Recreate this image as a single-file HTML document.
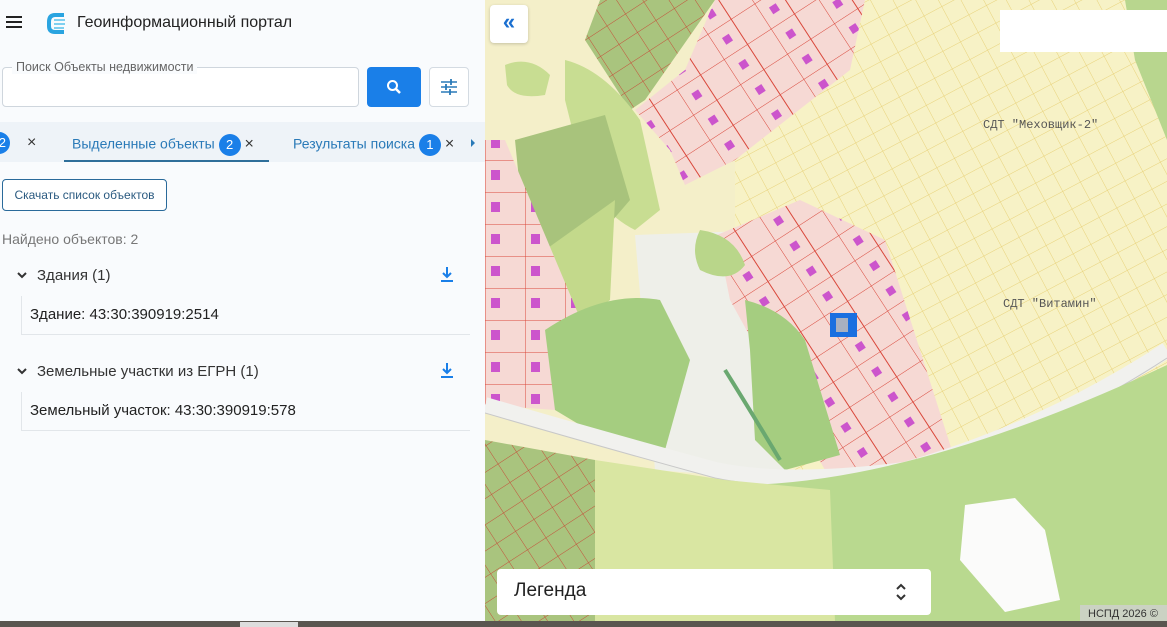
<!DOCTYPE html>
<html><head><meta charset="utf-8"><style>
*{margin:0;padding:0;box-sizing:border-box}
body{width:1167px;height:627px;overflow:hidden;font-family:"Liberation Sans",sans-serif;background:#f9fbfd;position:relative}
.a{position:absolute}
.panel{left:0;top:0;width:485px;height:621px;background:#f9fbfd}
.t{white-space:nowrap}
.badge{display:inline-block;width:22px;height:22px;border-radius:11px;background:#1a7fe8;color:#fff;font-size:13px;text-align:center;line-height:22px;vertical-align:middle}
</style></head><body>
<div class="a panel">
 <div class="a" style="left:6px;top:16px;width:16px;height:2px;background:#222;box-shadow:0 5px 0 #222,0 10px 0 #222"></div>
 <svg class="a" style="left:46px;top:12px" width="22" height="22" viewBox="0 0 22 22"><path d="M18 3 H9 Q3 3 3 10 V14 Q3 20 9 20 H18" fill="none" stroke="#2aa4e0" stroke-width="4"/><path d="M8 8 H19 M8 12 H19 M8 16 H18" stroke="#7fd0f0" stroke-width="2"/></svg>
 <div class="a t" style="left:77px;top:14px;font-size:16px;color:#222">Геоинформационный портал</div>
 <div class="a" style="left:2px;top:67px;width:357px;height:40px;border:1px solid #cfd6dd;border-radius:4px;background:#fff"></div>
 <div class="a t" style="left:12px;top:60px;font-size:12.5px;color:#666;background:#f9fbfd;padding:0 4px">Поиск Объекты недвижимости</div>
 <div class="a" style="left:367px;top:67px;width:54px;height:40px;background:#1a7fe8;border-radius:4px"></div>
 <svg class="a" style="left:386px;top:79px" width="16" height="16" viewBox="0 0 16 16"><circle cx="6.5" cy="6.5" r="4.5" fill="none" stroke="#fff" stroke-width="2"/><path d="M10 10 L14 14" stroke="#fff" stroke-width="2.5"/></svg>
 <div class="a" style="left:429px;top:67px;width:40px;height:40px;border:1px solid #d4dbe2;border-radius:4px;background:#fff"></div>
 <svg class="a" style="left:440px;top:79px" width="18" height="16" viewBox="0 0 18 16"><path d="M1 3H17M1 8H17M1 13H17" stroke="#2a7ab8" stroke-width="1.6"/><path d="M11 0V6M6 5V11M10 10V16" stroke="#2a7ab8" stroke-width="1.8"/></svg>
 <div class="a" style="left:0;top:122px;width:485px;height:40px;background:#eef3f8"></div>
 <div class="a" style="left:-12px;top:132px;width:22px;height:22px;border-radius:11px;background:#1a7fe8;color:#fff;font-size:13px;text-align:right;line-height:22px;padding-right:4px">2</div>
 <div class="a t" style="left:27px;top:134px;font-size:16px;color:#333">×</div>
 <div class="a t" style="left:72px;top:134px;font-size:14px;color:#2a7ab8">Выделенные объекты <span class="badge">2</span> <span style="color:#333;font-size:16px">×</span></div>
 <div class="a" style="left:64px;top:160px;width:205px;height:2px;background:#2f6f9a"></div>
 <div class="a t" style="left:293px;top:134px;font-size:14px;color:#2a7ab8">Результаты поиска <span class="badge">1</span> <span style="color:#333;font-size:16px">×</span></div>
 <div class="a" style="left:471px;top:139px;width:0;height:0;border-left:4px solid #2a7ab8;border-top:4px solid transparent;border-bottom:4px solid transparent"></div>
 <div class="a t" style="left:2px;top:179px;width:165px;height:32px;border:1px solid #2a6a9a;border-radius:4px;font-size:12px;color:#2a5a80;text-align:center;line-height:30px;background:#fff">Скачать список объектов</div>
 <div class="a t" style="left:2px;top:231px;font-size:14px;color:#777">Найдено объектов: 2</div>
 <svg class="a" style="left:17px;top:272px" width="10" height="8"><path d="M1 1L5 5L9 1" fill="none" stroke="#333" stroke-width="2"/></svg>
 <div class="a t" style="left:37px;top:267px;font-size:15px;color:#333">Здания (1)</div>
 <svg class="a" style="left:440px;top:266px" width="14" height="17"><path d="M7 1V10M3 7L7 11L11 7" fill="none" stroke="#1a7fe8" stroke-width="2"/><path d="M1 15H13" stroke="#1a7fe8" stroke-width="2"/></svg>
 <div class="a" style="left:21px;top:296px;width:449px;height:39px;border-left:1px solid #e2e6ea;border-bottom:1px solid #e2e6ea"></div>
 <div class="a t" style="left:30px;top:306px;font-size:15px;color:#222">Здание: 43:30:390919:2514</div>
 <svg class="a" style="left:17px;top:368px" width="10" height="8"><path d="M1 1L5 5L9 1" fill="none" stroke="#333" stroke-width="2"/></svg>
 <div class="a t" style="left:37px;top:363px;font-size:15px;color:#333">Земельные участки из ЕГРН (1)</div>
 <svg class="a" style="left:440px;top:362px" width="14" height="17"><path d="M7 1V10M3 7L7 11L11 7" fill="none" stroke="#1a7fe8" stroke-width="2"/><path d="M1 15H13" stroke="#1a7fe8" stroke-width="2"/></svg>
 <div class="a" style="left:21px;top:392px;width:449px;height:39px;border-left:1px solid #e2e6ea;border-bottom:1px solid #e2e6ea"></div>
 <div class="a t" style="left:30px;top:402px;font-size:15px;color:#222">Земельный участок: 43:30:390919:578</div>
</div>
<svg class="a" style="left:485px;top:0" width="682" height="627" viewBox="0 0 682 627">
<defs>
 <pattern id="yg" width="20" height="20" patternUnits="userSpaceOnUse" patternTransform="rotate(-28)"><rect width="20" height="20" fill="#f7f2c6"/><path d="M0 0H20M0 0V20" stroke="#e8d27a" stroke-width="1"/></pattern>
 <pattern id="rg" width="56" height="30" patternUnits="userSpaceOnUse" patternTransform="rotate(-33)"><rect width="56" height="30" fill="#f6d9d4"/><path d="M0 0H56M0 0V30M28 0V30" stroke="#d9473a" stroke-width="1"/><rect x="10" y="11" width="8" height="8" fill="#cc55cc"/></pattern>
 <pattern id="og" width="22" height="22" patternUnits="userSpaceOnUse" patternTransform="rotate(-33)"><rect width="22" height="22" fill="#a9c47e"/><path d="M0 0H22M0 0V22" stroke="#c4503a" stroke-width="1"/></pattern>
 <pattern id="lp" width="40" height="32" patternUnits="userSpaceOnUse"><rect width="40" height="32" fill="#f6d9d4"/><path d="M0 0H40M0 0V32" stroke="#d9473a" stroke-width="1"/><rect x="6" y="10" width="9" height="10" fill="#cc55cc"/></pattern>
</defs>
<rect width="682" height="627" fill="#f4efc9"/>
<rect x="250" y="0" width="432" height="480" fill="url(#yg)"/>
<path d="M640 0H682V140L650 60Z" fill="#b8d68e"/>
<rect x="515" y="10" width="167" height="42" fill="#fff"/>
<path d="M115 0H230L160 100L145 110L100 40Z" fill="url(#og)"/>
<path d="M230 0H380L365 70L250 160L200 185L185 150L150 110L200 70Z" fill="url(#rg)"/>
<path d="M20 65Q45 55 65 75L60 95Q30 100 22 85Z" fill="#c8dd92"/>
<path d="M80 60Q120 70 155 120L175 210L150 230Q110 210 95 160L80 100Z" fill="#c8dd92"/>
<path d="M30 140L120 115L145 200L85 270L40 240Z" fill="#a8c37c"/>
<path d="M60 250L130 200L125 300L100 320L70 300Z" fill="#c3d98b"/>
<path d="M0 140H20L100 330L70 410L0 405Z" fill="url(#lp)"/>
<path d="M150 235L290 230L300 480L170 470Z" fill="#eeefe9"/>
<path d="M232 235L315 200L400 240L470 460L380 478L340 470L300 400L245 300Z" fill="url(#rg)"/>
<path d="M215 230Q250 235 260 265Q245 285 215 270Q205 250 215 230Z" fill="#b9d68a"/>
<path d="M60 330Q120 290 175 300L205 360L180 450L120 440L70 410Z" fill="#a5cd80"/>
<path d="M260 300Q300 310 320 340L355 455L300 470L270 440L265 350Z" fill="#a5cd80"/>
<path d="M0 405Q120 440 230 470Q300 485 420 470Q560 430 682 350" fill="none" stroke="#f1f1ee" stroke-width="16"/>
<path d="M0 405Q120 440 230 470Q300 485 420 470Q560 430 682 350" fill="none" stroke="#c8c8c8" stroke-width="1" transform="translate(0,8)"/>
<path d="M240 485Q420 488 682 365V621H240Z" fill="#b9d98f"/>
<path d="M0 440L110 460L110 621H0Z" fill="url(#og)"/>
<path d="M110 460L240 480L345 490L350 621H110Z" fill="#d9e6a2"/>
<path d="M480 505L530 498L560 530L575 600L520 612L475 560Z" fill="#fbfbfa"/>
<path d="M240 370Q265 410 295 460" fill="none" stroke="#6aa870" stroke-width="4"/>
<rect x="345" y="313" width="27" height="24" fill="#1a6fe0"/><rect x="351" y="318" width="12" height="14" fill="#a8b0c0"/>
<text x="498" y="128" font-family="Liberation Mono,monospace" font-size="12" fill="#555">СДТ "Меховщик-2"</text>
<text x="518" y="307" font-family="Liberation Mono,monospace" font-size="12" fill="#555">СДТ "Витамин"</text>
<rect x="595" y="605" width="87" height="16" fill="#cfcfcf" opacity=".8"/>
<text x="603" y="617" font-size="11" fill="#333" font-family="Liberation Sans,sans-serif">НСПД 2026 ©</text>
</svg>
<div class="a" style="left:490px;top:5px;width:38px;height:38px;background:#fff;border-radius:4px;box-shadow:0 1px 3px rgba(0,0,0,.2);color:#1a6fd0;font-size:22px;font-weight:bold;text-align:center;line-height:34px">«</div>
<div class="a" style="left:497px;top:569px;width:434px;height:46px;background:#fff;border-radius:4px"></div>
<div class="a t" style="left:514px;top:580px;font-size:19px;color:#222">Легенда</div>
<svg class="a" style="left:895px;top:582px" width="12" height="20"><path d="M2 7L6 3L10 7M2 13L6 17L10 13" fill="none" stroke="#333" stroke-width="2"/></svg>
<div class="a" style="left:0;top:621px;width:1167px;height:6px;background:#5a5650"></div>
<div class="a" style="left:240px;top:622px;width:58px;height:5px;background:#ddd"></div>
</body></html>
